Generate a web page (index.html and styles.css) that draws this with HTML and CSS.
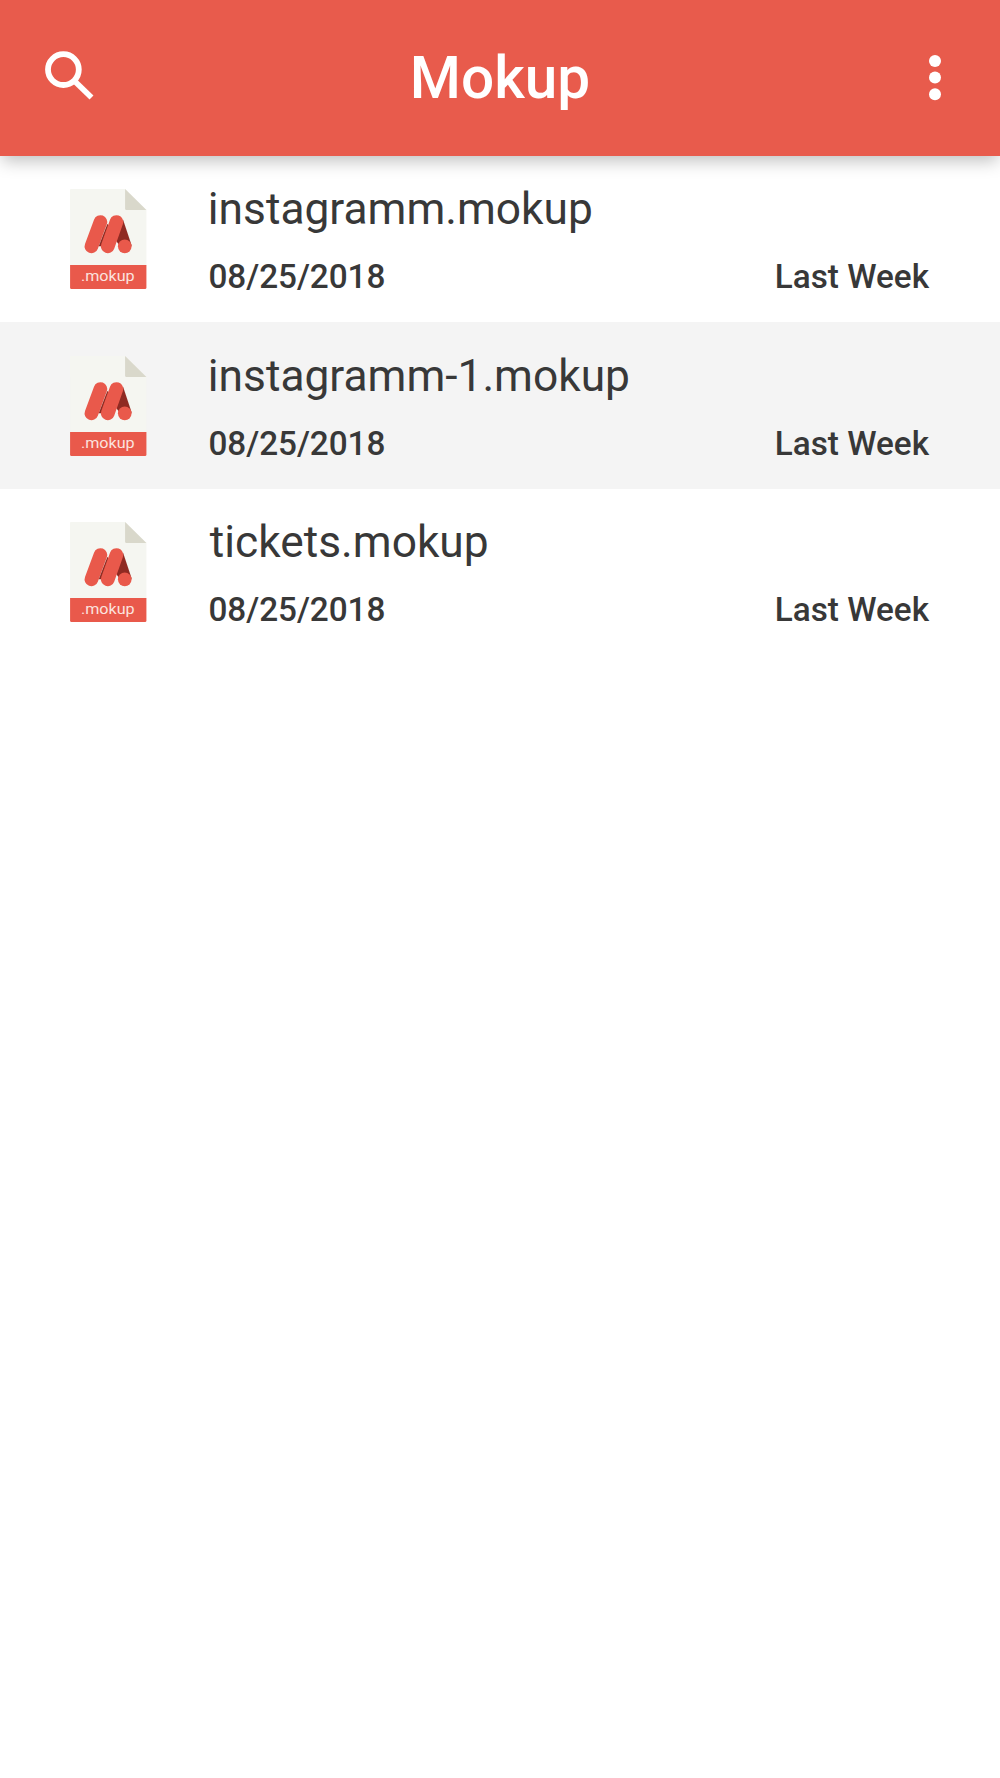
FILE: index.html
```html
<!DOCTYPE html>
<html lang="en">
<head>
<meta charset="utf-8">
<title>Mokup</title>
<link rel="stylesheet" href="styles.css">
</head>
<body>
<svg width="0" height="0" class="defs" aria-hidden="true">
  <symbol id="file" viewBox="0 0 229 300" overflow="visible">
    <path d="M2 0H165L229 63V230H0V2Q0 0 2 0Z" fill="#f5f6f1"/>
    <path d="M165 0L229 63H169Q165 63 165 59Z" fill="#d9d8cb"/>
    <path d="M0 228H229V296Q229 300 225 300H4Q0 300 0 296Z" fill="#e9594b"/>
    <path d="M159 92L185 170L150 172L134 150Z" fill="#8f2a22"/>
    <path d="M91 99L64 172" stroke="#e9594b" stroke-width="41" stroke-linecap="round"/>
    <path d="M112 104L118 115L95 172L86 172Z" fill="#8f2a22"/>
    <path d="M139 99L113 172" stroke="#e9594b" stroke-width="41" stroke-linecap="round"/>
    <circle cx="164" cy="172" r="20.500" fill="#e9594b"/>
  </symbol>
</svg>
<header class="bar">
  <svg class="search" viewBox="0 0 50 50" fill="none" stroke="#fff"><circle cx="18.4" cy="18.600" r="15.400" stroke-width="5.800"/><path d="M30.500 31L46.500 46.500" stroke-width="5.600"/></svg>
  <h1 class="title">Mokup</h1>
  <svg class="more" viewBox="0 0 12 46" fill="#fff"><circle cx="6" cy="6" r="6"/><circle cx="6" cy="22.600" r="6"/><circle cx="6" cy="39.200" r="6"/></svg>
</header>
<main class="list">
  <article class="row">
    <svg class="icon" viewBox="0 0 229 300"><use href="#file" width="229" height="300"/><text transform="translate(113 277) scale(1.1 1)" text-anchor="middle" class="file-ext">.mokup</text></svg>
    <div class="info">
      <h2 class="name">instagramm.mokup</h2>
      <div class="meta"><span class="date">08/25/2018</span><span>Last Week</span></div>
    </div>
  </article>
  <article class="row row-alt">
    <svg class="icon" viewBox="0 0 229 300"><use href="#file" width="229" height="300"/><text transform="translate(113 277) scale(1.1 1)" text-anchor="middle" class="file-ext">.mokup</text></svg>
    <div class="info">
      <h2 class="name">instagramm-1.mokup</h2>
      <div class="meta"><span class="date">08/25/2018</span><span>Last Week</span></div>
    </div>
  </article>
  <article class="row">
    <svg class="icon" viewBox="0 0 229 300"><use href="#file" width="229" height="300"/><text transform="translate(113 277) scale(1.1 1)" text-anchor="middle" class="file-ext">.mokup</text></svg>
    <div class="info">
      <h2 class="name name-inset">tickets.mokup</h2>
      <div class="meta"><span class="date">08/25/2018</span><span>Last Week</span></div>
    </div>
  </article>
</main>
</body>
</html>
```
FILE: styles.css
```css
* { box-sizing: border-box; }
body {
  margin: 0;
  min-height: 100vh;
  background: #fff;
  color: #383838;
  font-family: Roboto, sans-serif;
}
.defs { display: block; height: 0; }
.bar {
  position: relative;
  display: grid;
  grid-template-columns: 50px 1fr 50px;
  align-items: start;
  height: 155.7px;
  padding: 0 45px;
  background: #e85b4c;
  color: #fff;
  box-shadow: 0 7px 16px -2px rgba(0, 0, 0, .25);
}
.search { width: 50px; height: 50px; margin-top: 51px; }
.title {
  margin: 43px 0 0;
  font-size: 58.5px;
  font-weight: 500;
  line-height: 70px;
  text-align: center;
}
.more { width: 12px; height: 46px; margin-top: 55px; justify-self: end; margin-right: 14px; }
.row {
  display: flex;
  height: 166.5px;
  padding: 33.5px 71px 0 70.3px;
}
.row-alt { background: #f4f4f4; }
.icon { flex: none; width: 76.5px; height: 100px; }
.info { flex: 1; margin-left: 61px; }
.name {
  margin: -6.2px 0 0;
  font-size: 44.3px;
  font-weight: 400;
  line-height: 52px;
}
.name-inset { padding-left: 2px; }
.meta {
  display: flex;
  justify-content: space-between;
  margin-top: 22.4px;
  font-size: 33.3px;
  font-weight: 500;
  line-height: 40px;
}
.date { padding-left: .7px; letter-spacing: -.05px; }
.file-ext { font-size: 44px; fill: #fbe3df; }
```
